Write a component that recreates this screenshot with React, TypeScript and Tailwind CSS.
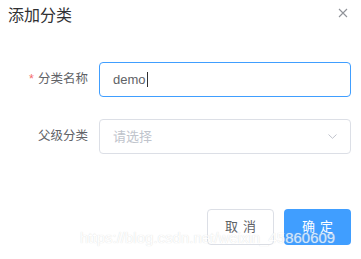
import React from "react";

export default function App() {
  const font = { fontFamily: '"Liberation Sans", "Noto Sans CJK SC", sans-serif' };
  return (
    <div
      className="relative w-[361px] h-[259px] overflow-hidden bg-white"
      style={font}
    >
      <div className="flex items-start justify-between pl-[8px] pr-[13px] pt-[7px]">
        <span className="text-[16px] leading-[17px] text-[#303133]">添加分类</span>
        <svg width="10" height="10" viewBox="0 0 10 10" className="mt-[1px]">
          <path d="M1 1 L9 9 M9 1 L1 9" stroke="#909399" strokeWidth="1.1" fill="none" />
        </svg>
      </div>

      <div className="mt-[38px] flex flex-col gap-[22px] pr-[10px]">
        <div className="flex items-center h-[35px]">
          <div className="w-[99px] pr-[11px] text-right text-[12.5px] text-[#606266]">
            <span className="text-[#f56c6c] mr-[4px]">*</span>分类名称
          </div>
          <div className="flex-1 h-[35px] rounded-[4px] border border-[#409eff] flex items-center pl-[13px] text-[13px] text-[#606266]">
            demo<span className="inline-block w-px h-[15px] bg-[#303133] ml-[1px]" />
          </div>
        </div>
        <div className="flex items-center h-[35px]">
          <div className="w-[99px] pr-[11px] text-right text-[12.5px] text-[#606266]">父级分类</div>
          <div className="flex-1 h-[35px] rounded-[4px] border border-[#dcdfe6] flex items-center justify-between pl-[13px] pr-[13px] text-[13px] text-[#c0c4cc]">
            <span>请选择</span>
            <svg width="9" height="5" viewBox="0 0 9 5">
              <path d="M0.5 0.5 L4.5 4.3 L8.5 0.5" stroke="#c0c4cc" strokeWidth="1" fill="none" />
            </svg>
          </div>
        </div>
      </div>

      <div className="mt-[55px] flex justify-end gap-[10px] pr-[10px]">
        <button className="w-[67px] h-[36px] rounded-[4px] border border-[#dcdfe6] bg-white text-[13px] text-[#606266] tracking-[5px] pl-[5px]">
          取消
        </button>
        <button className="w-[67px] h-[36px] rounded-[4px] bg-[#409eff] text-[13px] text-white tracking-[5px] pl-[5px]">
          确定
        </button>
      </div>

      <div className="absolute left-[80px] top-[229px] text-[15px] leading-[17px] text-[#ffffff] opacity-75 pointer-events-none whitespace-nowrap [text-shadow:0_0_1px_#c8c8c8]">
        https://blog.csdn.net/weixin_45860609
      </div>
    </div>
  );
}
